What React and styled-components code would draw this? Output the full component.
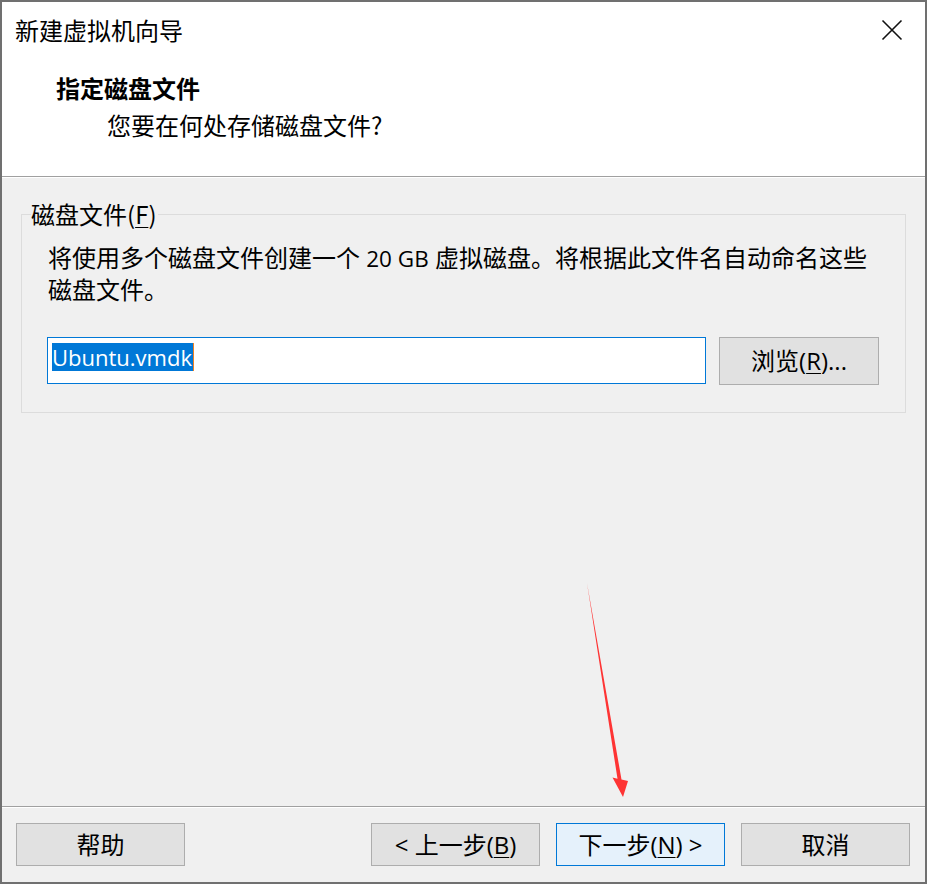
import React from "react";
import styled, { createGlobalStyle } from "styled-components";

const Global = createGlobalStyle`
  html, body { margin: 0; padding: 0; background: #f0f0f0; }
  body {
    font-family: "Open Sans", "Noto Sans CJK SC", sans-serif;
    font-size: 24px;
    color: #000;
  }
  * { box-sizing: border-box; }
`;

const Window = styled.div`
  position: relative;
  width: 927px;
  height: 884px;
  border: 2px solid #707070;
  display: flex;
  flex-direction: column;
  background: #f0f0f0;
  font-family: "Open Sans", "Noto Sans CJK SC", sans-serif;
`;

const Header = styled.div`
  height: 175px;
  flex: none;
  background: #fff;
  border-bottom: 1px solid #a0a0a0;
  box-shadow: 0 1px 0 #fff;
  display: flex;
  flex-direction: column;
`;

const TitleBar = styled.div`
  height: 56px;
  display: flex;
  align-items: center;
  justify-content: space-between;
  padding: 0 22px 0 13px;
`;

const Title = styled.div`
  font-family: "Noto Sans CJK SC", sans-serif;
  font-size: 24px;
  line-height: 24px;
`;

const CloseButton = styled.div`
  width: 22px;
  height: 22px;
  display: flex;
  align-items: center;
  justify-content: center;
`;

const Heading = styled.div`
  margin-top: 14px;
  padding-left: 54px;
  font-family: "Noto Sans CJK SC", sans-serif;
  font-weight: 700;
  font-size: 24px;
  line-height: 32px;
`;

const SubHeading = styled.div`
  margin-top: 5px;
  padding-left: 105px;
  font-family: "Noto Sans CJK SC", sans-serif;
  font-size: 24px;
  line-height: 32px;
`;

const Body = styled.div`
  flex: 1;
  padding: 24px 19px 0;
  margin-top: 1px;
`;

const Group = styled.fieldset`
  margin: 0;
  padding: 0 0 27px 0;
  border: 1px solid #dcdcdc;
  min-width: 0;
`;

const Legend = styled.legend`
  margin-left: 9px;
  padding: 0 1px 0 0;
  font-family: "Noto Sans CJK SC", sans-serif;
  font-size: 24px;
  line-height: 24px;
  white-space: nowrap;
`;

const GroupContent = styled.div`
  padding-left: 25px;
`;

const Key = styled.span`
  text-decoration: underline;
  text-underline-offset: 3px;
  text-decoration-thickness: 1px;
`;

const Paragraph = styled.p`
  margin: 16px 0 0 1px;
  font-family: "Open Sans", "Noto Sans CJK SC", sans-serif;
  font-size: 24px;
  line-height: 31px;
  white-space: nowrap;
`;

const Latin = styled.span`
  font-family: "Open Sans", sans-serif;
  font-size: 22.5px;
`;

const InputRow = styled.div`
  margin-top: 32px;
  display: flex;
  align-items: flex-start;
  gap: 13px;
`;

const TextBox = styled.div`
  width: 659px;
  height: 47px;
  background: #fff;
  border: 1px solid #0078d7;
  padding: 2px 0 0 4px;
`;

const Selected = styled.span`
  display: inline-block;
  height: 28px;
  line-height: 28px;
  padding: 0 1px 0 0;
  background: #0078d7;
  color: #fff;
  font-family: "Open Sans", sans-serif;
  font-size: 22px;
  border-right: 1px solid #f08020;
`;

const Button = styled.div`
  width: ${(p) => p.$w || 169}px;
  height: ${(p) => p.$h || 43}px;
  display: flex;
  align-items: center;
  justify-content: center;
  background: ${(p) => (p.$primary ? "#e5f1fb" : "#e1e1e1")};
  border: 1px solid ${(p) => (p.$primary ? "#0078d7" : "#adadad")};
  font-family: "Open Sans", "Noto Sans CJK SC", sans-serif;
  font-size: 24px;
  line-height: 24px;
  white-space: nowrap;
`;

const Footer = styled.div`
  flex: none;
  height: 76px;
  border-top: 1px solid #a0a0a0;
  box-shadow: inset 0 1px 0 #fff;
  display: flex;
  align-items: flex-start;
  justify-content: space-between;
  padding: 16px 15px 0 14px;
`;

const ButtonGroup = styled.div`
  display: flex;
  gap: 16px;
`;

const ArrowOverlay = styled.svg`
  position: absolute;
  left: -2px;
  top: -2px;
  width: 927px;
  height: 884px;
  pointer-events: none;
`;

export default function App() {
  return (
    <>
      <Global />
      <Window>
        <Header>
          <TitleBar>
            <Title>新建虚拟机向导</Title>
            <CloseButton>
              <svg width="22" height="22" viewBox="0 0 22 22">
                <path d="M1.5 1.5 L20.5 20.5 M20.5 1.5 L1.5 20.5" stroke="#111" strokeWidth="1.6" fill="none" />
              </svg>
            </CloseButton>
          </TitleBar>
          <Heading>指定磁盘文件</Heading>
          <SubHeading>您要在何处存储磁盘文件?</SubHeading>
        </Header>
        <Body>
          <Group>
            <Legend>
              磁盘文件(<Key>F</Key>)
            </Legend>
            <GroupContent>
              <Paragraph>
                将使用多个磁盘文件创建一个 <Latin>20 GB</Latin> 虚拟磁盘。将根据此文件名自动命名这些
                <br />
                磁盘文件。
              </Paragraph>
              <InputRow>
                <TextBox>
                  <Selected>Ubuntu.vmdk</Selected>
                </TextBox>
                <Button $w={160} $h={48}>
                  浏览(<Key>R</Key>)...
                </Button>
              </InputRow>
            </GroupContent>
          </Group>
        </Body>
        <Footer>
          <Button>帮助</Button>
          <ButtonGroup>
            <Button>
              &lt; 上一步(<Key>B</Key>)
            </Button>
            <Button $primary>
              下一步(<Key>N</Key>) &gt;
            </Button>
            <Button>取消</Button>
          </ButtonGroup>
        </Footer>
        <ArrowOverlay viewBox="0 0 927 884">
          <polygon
            points="587,583 621.5,779.5 628,781 623,797 612.5,777.5 617.5,778.8"
            fill="#fe3434"
          />
        </ArrowOverlay>
      </Window>
    </>
  );
}
